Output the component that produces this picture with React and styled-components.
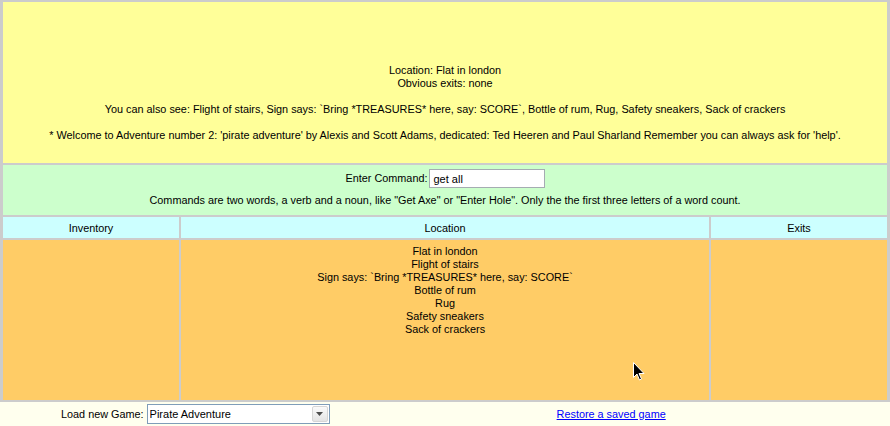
import React from "react";
import styled, { createGlobalStyle } from "styled-components";

const GlobalStyle = createGlobalStyle`
  html, body {
    margin: 0;
    padding: 0;
    background: #ffffee;
  }
  body {
    font-family: "Liberation Sans", Arial, sans-serif;
    font-size: 10.85px;
    line-height: 13px;
    color: #000;
  }
`;

const Page = styled.div`
  width: 890px;
  height: 426px;
  position: relative;
  overflow: hidden;
`;

const Board = styled.div`
  display: grid;
  grid-template-columns: 176px 528px 176px;
  grid-template-rows: 161px 50px 21px 160px;
  gap: 2px;
  padding: 2px 3px;
  background: #cccccc;
`;

const Cell = styled.div`
  background: ${(p) => p.$bg};
  grid-column: ${(p) => (p.$wide ? "1 / -1" : "auto")};
  text-align: center;
`;

const Status = styled(Cell)`
  display: flex;
  flex-direction: column;
  gap: 13px;
  padding-top: 62px;
  box-sizing: border-box;

  p {
    margin: 0;
    height: 13px;
  }
  p:first-child {
    height: 26px;
  }
`;

const CommandCell = styled(Cell)`
  padding-top: 4px;
  box-sizing: border-box;
`;

const CommandRow = styled.div`
  display: flex;
  justify-content: center;
  align-items: center;
  gap: 2px;
  margin-bottom: 6px;
  padding-left: 1px;
`;

const CommandInput = styled.input`
  width: 116px;
  height: 19px;
  box-sizing: border-box;
  border: 1px solid #a5acb2;
  padding: 0 3px;
  font-family: inherit;
  font-size: 11px;
  color: #000;
  background: #fff;
  outline: none;
`;

const Heading = styled(Cell)`
  padding-top: 1px;
  line-height: 20px;
  box-sizing: border-box;
`;

const ListCell = styled(Cell)`
  padding-top: 5px;
  box-sizing: border-box;
`;

const Footer = styled.div`
  display: flex;
  align-items: center;
  height: 24px;
  padding-left: 61px;
`;

const LoadGroup = styled.label`
  display: flex;
  align-items: center;
  gap: 3px;
`;

const SelectBox = styled.div`
  display: flex;
  width: 183px;
  height: 20px;
  box-sizing: border-box;
  border: 1px solid #7f9db9;
  background: #fff;
`;

const Select = styled.select`
  flex: 1;
  appearance: none;
  border: none;
  outline: none;
  background: transparent;
  font-family: inherit;
  font-size: 11px;
  color: #000;
  padding: 0 2px;
  margin: 0;
`;

const DropButton = styled.span`
  width: 16px;
  margin: 1px;
  display: flex;
  align-items: center;
  justify-content: center;
  border-radius: 2px;
  background: linear-gradient(#fafafa, #e4e4e4);
  border: 1px solid #d6d6d6;
  box-sizing: border-box;
`;

const RestoreLink = styled.a`
  margin-left: 227px;
  color: #0000ff;
  text-decoration: underline;
  cursor: pointer;
`;

const Pointer = styled.svg`
  position: absolute;
  left: 633px;
  top: 362px;
`;

const locationItems = [
  "Flat in london",
  "Flight of stairs",
  "Sign says: `Bring *TREASURES* here, say: SCORE`",
  "Bottle of rum",
  "Rug",
  "Safety sneakers",
  "Sack of crackers",
];

export default function App() {
  return (
    <Page>
      <GlobalStyle />
      <Board>
        <Status $bg="#ffff99" $wide>
          <p>
            Location: Flat in london
            <br />
            Obvious exits: none
          </p>
          <p>
            You can also see: Flight of stairs, Sign says: `Bring *TREASURES*
            here, say: SCORE`, Bottle of rum, Rug, Safety sneakers, Sack of
            crackers
          </p>
          <p>
            * Welcome to Adventure number 2: 'pirate adventure' by Alexis and
            Scott Adams, dedicated: Ted Heeren and Paul Sharland Remember you
            can always ask for 'help'.
          </p>
        </Status>
        <CommandCell $bg="#ccffcc" $wide>
          <CommandRow>
            Enter Command:
            <CommandInput defaultValue="get all" />
          </CommandRow>
          Commands are two words, a verb and a noun, like "Get Axe" or "Enter
          Hole". Only the the first three letters of a word count.
        </CommandCell>
        <Heading $bg="#ccffff">Inventory</Heading>
        <Heading $bg="#ccffff">Location</Heading>
        <Heading $bg="#ccffff">Exits</Heading>
        <ListCell $bg="#ffcc66" />
        <ListCell $bg="#ffcc66">
          {locationItems.map((item) => (
            <div key={item}>{item}</div>
          ))}
        </ListCell>
        <ListCell $bg="#ffcc66" />
      </Board>
      <Footer>
        <LoadGroup>
          Load new Game:
          <SelectBox>
            <Select defaultValue="pirate">
              <option value="pirate">Pirate Adventure</option>
            </Select>
            <DropButton>
              <svg width="7" height="4" viewBox="0 0 7 4">
                <path d="M0 0h7L3.5 4z" fill="#4d4d4d" />
              </svg>
            </DropButton>
          </SelectBox>
        </LoadGroup>
        <RestoreLink>Restore a saved game</RestoreLink>
      </Footer>
      <Pointer width="12" height="19" viewBox="0 0 12 19">
        <path
          d="M0.5 0.5v15l3.5-3.5 2.5 6 2-1-2.5-5.5h5z"
          fill="#000"
          stroke="#fff"
          strokeWidth="1"
        />
      </Pointer>
    </Page>
  );
}
